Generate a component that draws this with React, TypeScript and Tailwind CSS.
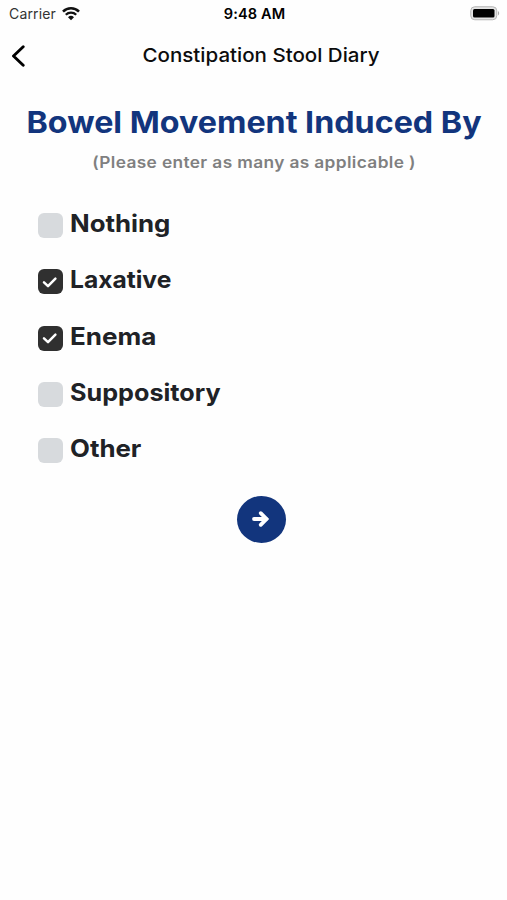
import { useState } from 'react';

const OPTIONS = [
  { label: 'Nothing', stretch: 'scale-x-[1.075]' },
  { label: 'Laxative', stretch: 'scale-x-[1.025]' },
  { label: 'Enema', stretch: 'scale-x-[1.085]' },
  { label: 'Suppository', stretch: 'scale-x-[1.05]' },
  { label: 'Other', stretch: 'scale-x-[1.075]' },
];

function StatusBar() {
  return (
    <div className="flex h-7 items-center justify-between pl-[9px] pr-[7px] text-black">
      <div className="flex flex-1 items-center gap-[6px]">
        <span className="text-[14px] leading-none tracking-[0.15px] text-[#333]">
          Carrier
        </span>
        <svg width="18" height="14" viewBox="0 0 18 14" fill="none">
          <path d="M1 4.6a11.4 11.4 0 0 1 16 0" stroke="#111" strokeWidth="2.6" />
          <path d="M3.8 7.8a7.4 7.4 0 0 1 10.4 0" stroke="#111" strokeWidth="2.3" />
          <path d="M9 13.2 6 10.2a4.3 4.3 0 0 1 6 0Z" fill="#111" />
        </svg>
      </div>
      <span className="scale-x-[1.04] text-[14px] font-semibold leading-none tracking-[0.1px]">
        9:48 AM
      </span>
      <div className="flex flex-1 justify-end">
        <svg width="30" height="16" viewBox="0 0 30 16">
          <rect x="0.75" y="0.75" width="26" height="13" rx="4" fill="#e4e4e4" stroke="#b5b5b5" />
          <rect x="3" y="3" width="21.5" height="8.5" rx="1.5" fill="#000" />
          <path d="M28 5c1.6.8 1.6 3.7 0 4.5Z" fill="#aaa" />
        </svg>
      </div>
    </div>
  );
}

export default function App() {
  const [selected, setSelected] = useState<string[]>(['Laxative', 'Enema']);

  const toggle = (label: string) => {
    setSelected((prev) =>
      prev.includes(label)
        ? prev.filter((item) => item !== label)
        : [...prev, label]
    );
  };

  return (
    <div className="min-h-screen overflow-hidden bg-[#fefefe] font-['Inter',sans-serif]">
      <StatusBar />

      <header className="flex h-14 items-center pl-[11px] pr-[11px]">
        <button type="button" aria-label="Back" className="w-[14px]">
          <svg width="14" height="22" viewBox="0 0 14 22" fill="none">
            <path d="M12.2 1.7 2.5 11l9.7 9.3" stroke="#000" strokeWidth="2.9" strokeLinecap="round" strokeLinejoin="round" />
          </svg>
        </button>
        <h1 className="flex-1 scale-x-[1.08] whitespace-nowrap pl-px text-center text-[19px] font-medium leading-6 text-[#0c0c0c]">
          Constipation Stool Diary
        </h1>
      </header>

      <main>
        <h2 className="mt-5 scale-x-[1.075] whitespace-nowrap pl-px text-center text-[30px] font-bold leading-9 text-[#12357d]">
          Bowel Movement Induced By
        </h2>
        <p className="mt-[10px] scale-x-[1.08] whitespace-nowrap pl-px text-center text-[16px] font-semibold leading-6 tracking-[0.35px] text-[#808080]">
          (Please enter as many as applicable )
        </p>

        <ul className="mt-[37.2px] flex flex-col gap-[24.2px] pl-[37.5px]">
          {OPTIONS.map(({ label, stretch }) => {
            const checked = selected.includes(label);
            return (
              <li key={label} className="h-8">
                <button
                  type="button"
                  role="checkbox"
                  aria-checked={checked}
                  onClick={() => toggle(label)}
                  className="flex items-start gap-[7px]"
                >
                  <span
                    className={`mt-[2px] flex size-[25px] items-center justify-center rounded-[6px] ${
                      checked ? 'bg-[#303030]' : 'bg-[#d7dadd]'
                    }`}
                  >
                    {checked && (
                      <svg width="16" height="12" viewBox="0 0 16 12" fill="none">
                        <path d="m2 6.4 4 3.7 7.4-7.4" stroke="#fff" strokeWidth="2.5" strokeLinecap="round" strokeLinejoin="round" />
                      </svg>
                    )}
                  </span>
                  <span className={`-mt-[3px] origin-left text-[24px] font-bold leading-8 text-[#202226] ${stretch}`}>
                    {label}
                  </span>
                </button>
              </li>
            );
          })}
        </ul>

        <div className="mt-[27.6px] flex justify-center pl-[15px]">
          <button
            type="button"
            aria-label="Next"
            className="flex h-[47px] w-[49px] items-center justify-center rounded-[50%] bg-[#12357d]"
          >
            <svg width="18" height="18" viewBox="0 0 18 18" fill="none">
              <path d="M2 9h12" stroke="#fff" strokeWidth="3.8" strokeLinecap="round" />
              <path d="M8.7 3.2 14.5 9l-5.8 5.8" stroke="#fff" strokeWidth="3.8" strokeLinecap="round" />
            </svg>
          </button>
        </div>
      </main>
    </div>
  );
}
